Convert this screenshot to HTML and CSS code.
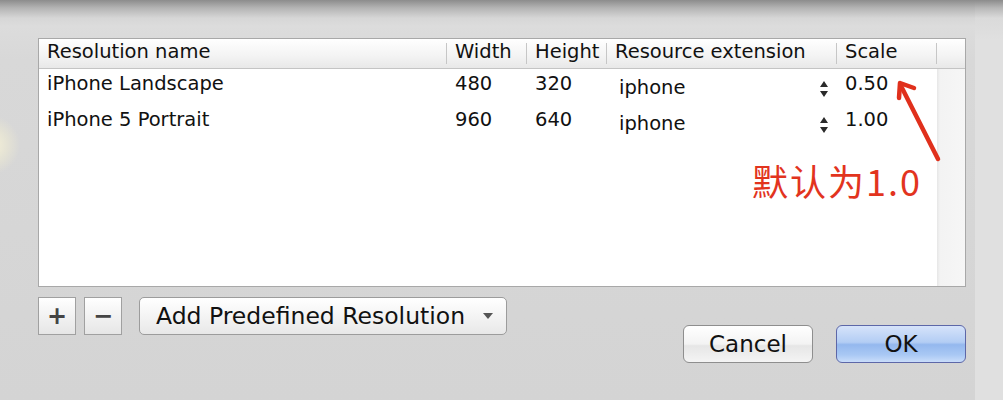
FILE: index.html
```html
<!DOCTYPE html>
<html lang="zh-CN">
<head>
  <meta charset="UTF-8" />
  <title>Resolutions</title>
  <link rel="stylesheet" href="styles.css">
</head>
<body>
  <div class="screen">
    <div class="dialog">
      <div class="table-box">
        <div class="thead">
          <div class="th c-name">Resolution name</div>
          <div class="th c-w">Width</div>
          <div class="th c-h">Height</div>
          <div class="th c-ext">Resource extension</div>
          <div class="th c-scale">Scale</div>
          <div class="th c-rest"></div>
        </div>
        <div class="tbody">
          <div class="rows">
            <div class="tr">
              <div class="td c-name">iPhone Landscape</div>
              <div class="td c-w">480</div>
              <div class="td c-h">320</div>
              <div class="td c-ext"><span class="combo">iphone</span>
                <svg class="stepper" width="10" height="18" viewBox="0 0 10 18"><path d="M5 1 L9 7 H1 Z M5 17 L9 11 H1 Z" fill="#2a2a2a"/></svg>
              </div>
              <div class="td c-scale">0.50</div>
            </div>
            <div class="tr">
              <div class="td c-name">iPhone 5 Portrait</div>
              <div class="td c-w">960</div>
              <div class="td c-h">640</div>
              <div class="td c-ext"><span class="combo">iphone</span>
                <svg class="stepper" width="10" height="18" viewBox="0 0 10 18"><path d="M5 1 L9 7 H1 Z M5 17 L9 11 H1 Z" fill="#2a2a2a"/></svg>
              </div>
              <div class="td c-scale">1.00</div>
            </div>
          </div>
          <div class="scroll-strip"></div>
        </div>
        <svg class="arrow" width="60" height="90" viewBox="0 0 60 90">
          <path d="M46 83 L9 10" stroke="#e0301c" stroke-width="4.5" stroke-linecap="round" fill="none"/>
          <path d="M7 22 L8 7 L22 12" stroke="#e0301c" stroke-width="4.5" stroke-linecap="round" stroke-linejoin="round" fill="none"/>
        </svg>
        <div class="note">默认为1.0</div>
      </div>
      <div class="controls">
        <div class="left-controls">
          <button class="sq-btn">+</button>
          <button class="sq-btn">&minus;</button>
          <button class="popup">Add Predefined Resolution
            <svg width="12" height="8" viewBox="0 0 12 8"><path d="M1 1 H11 L6 7 Z" fill="#555"/></svg>
          </button>
        </div>
        <div class="right-controls">
          <button class="push">Cancel</button>
          <button class="push default">OK</button>
        </div>
      </div>
    </div>
    <div class="side"></div>
  </div>
</body>
</html>
```

FILE: styles.css
```css
html, body {
  margin: 0;
  padding: 0;
}
body {
  width: 1003px;
  height: 400px;
  overflow: hidden;
  font-family: "DejaVu Sans", "Noto Sans CJK SC", sans-serif;
  color: #111;
}
.screen {
  display: flex;
  height: 400px;
  background: linear-gradient(to bottom, #8c8c8c 0px, #b4b4b4 8px, #d6d6d6 18px, #dcdcdc 26px, #d8d8d8 60px, #d4d4d4 400px);
}
.dialog {
  width: 975px;
  padding: 38px 0 0 38px;
  box-sizing: border-box;
  background: radial-gradient(circle at -10px 145px, rgba(250,245,215,0.9) 0, rgba(240,236,210,0.5) 18px, rgba(220,220,220,0) 30px);
}
.side {
  flex: 1;
  background: linear-gradient(to bottom, #8c8c8c 0px, #b8b8b8 8px, #dadada 18px, #e0e0e0 40px);
}
.table-box {
  position: relative;
  width: 928px;
  height: 249px;
  box-sizing: border-box;
  border: 1px solid #a8a8a8;
  background: #fff;
  display: flex;
  flex-direction: column;
}
.thead {
  display: flex;
  height: 29px;
  background: linear-gradient(to bottom, #ffffff, #f3f3f3 60%, #e8e8e8);
  border-bottom: 1px solid #c4c4c4;
  font-size: 19.5px;
  line-height: 22px;
}
.th {
  position: relative;
  box-sizing: border-box;
  padding: 2px 0 0 8px;
  white-space: nowrap;
}
.th::after {
  content: "";
  position: absolute;
  right: 0;
  top: 4px;
  bottom: 4px;
  width: 1px;
  background: #c6c6c6;
}
.th.c-rest::after { display: none; }
.c-name { width: 408px; }
.c-w { width: 80px; }
.c-h { width: 80px; }
.c-ext { width: 230px; }
.c-scale { width: 100px; }
.c-rest { flex: 1; }
.tbody {
  flex: 1;
  display: flex;
}
.rows {
  width: 898px;
}
.tr {
  display: flex;
  height: 36px;
  font-size: 19.5px;
  line-height: 22px;
}
.td {
  box-sizing: border-box;
  padding: 4px 0 0 8px;
  white-space: nowrap;
}
.td.c-ext {
  display: flex;
  align-items: flex-start;
  justify-content: space-between;
  padding-right: 8px;
  padding-left: 12px;
}
.combo {
  padding-top: 4px;
}
.stepper {
  margin-top: 7px;
}
.scroll-strip {
  flex: 1;
  background: linear-gradient(to right, #e6e6e6, #f3f3f3 3px, #f6f6f6);
}
.arrow {
  position: absolute;
  left: 853px;
  top: 37px;
}
.note {
  position: absolute;
  left: 713px;
  top: 120px;
  font-family: "Noto Sans CJK SC", sans-serif;
  font-size: 36px;
  line-height: 1.2;
  letter-spacing: 2px;
  color: #e2341e;
}
.controls {
  display: flex;
  justify-content: space-between;
  width: 928px;
  margin-top: 10px;
}
.left-controls {
  display: flex;
  gap: 8px;
  height: 38px;
}
.sq-btn {
  width: 38px;
  height: 38px;
  padding: 0;
  border: 1px solid #a0a0a0;
  background: linear-gradient(to bottom, #ffffff, #f2f2f2 50%, #e6e6e6);
  font-family: "DejaVu Sans", sans-serif;
  font-size: 24px;
  font-weight: bold;
  color: #444;
  line-height: 34px;
}
.popup {
  margin-left: 9px;
  width: 368px;
  height: 38px;
  display: flex;
  align-items: center;
  justify-content: space-between;
  padding: 0 12px 0 16px;
  border: 1px solid #9c9c9c;
  border-radius: 5px;
  background: linear-gradient(to bottom, #ffffff, #f4f4f4 50%, #e8e8e8);
  font-family: "DejaVu Sans", sans-serif;
  font-size: 23.5px;
  color: #111;
}
.right-controls {
  display: flex;
  gap: 23px;
  margin-top: 28px;
}
.push {
  width: 130px;
  height: 38px;
  border: 1px solid #8e8e8e;
  border-radius: 6px;
  background: linear-gradient(to bottom, #ffffff, #f3f3f3 50%, #e6e6e6 55%, #f4f4f4);
  font-family: "DejaVu Sans", sans-serif;
  font-size: 23px;
  color: #111;
  padding: 0;
}
.push.default {
  border-color: #5d67a8;
  background: linear-gradient(to bottom, #d6e3fa, #b3cdf4 45%, #94b8ee 52%, #a9c8f4 80%, #c9ddfa);
}
```
